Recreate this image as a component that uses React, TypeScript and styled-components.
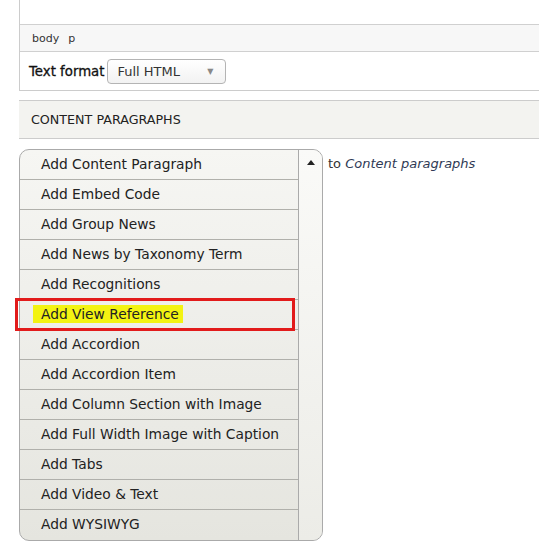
import React from "react";
import styled, { createGlobalStyle } from "styled-components";

const Global = createGlobalStyle`
  html, body { margin: 0; padding: 0; background: #fff; overflow: hidden; }
  body { font-family: "DejaVu Sans", Verdana, sans-serif; color: #333; }
`;

const Page = styled.div`
  width: 539px;
  height: 558px;
  padding-left: 19px;
  box-sizing: border-box;
  overflow: hidden;
`;

const Editor = styled.div`
  width: 560px;
  border-left: 1px solid #ccc;
  border-bottom: 1px solid #ccc;
`;

const EditArea = styled.div`
  height: 24px;
  border-bottom: 1px solid #d0d0d0;
  background: #fff;
`;

const PathBar = styled.div`
  height: 26px;
  background: #f7f7f7;
  border-bottom: 1px solid #d0d0d0;
  display: flex;
  align-items: center;
  gap: 9px;
  padding-left: 12px;
  font-size: 11px;
  color: #333;
`;

const FormatRow = styled.div`
  height: 38px;
  display: flex;
  align-items: center;
  gap: 3px;
  padding-left: 9px;
`;

const Label = styled.span`
  font-size: 13.3px;
  color: #111;
  -webkit-text-stroke: 0.3px #111;
`;

const Select = styled.div`
  width: 119px;
  height: 25px;
  box-sizing: border-box;
  border: 1px solid #b4b4b4;
  border-radius: 4px;
  background: linear-gradient(#ffffff, #f2f2f2);
  display: flex;
  align-items: center;
  justify-content: space-between;
  padding: 0 12px 0 9px;
  font-size: 13px;
  color: #333;
`;

const Caret = styled.span`
  font-size: 8px;
  color: #888;
`;

const SectionHeader = styled.div`
  margin-top: 9px;
  height: 37px;
  width: 560px;
  background: #f3f3f0;
  border-top: 1px solid #ccc;
  border-bottom: 1px solid #ccc;
  display: flex;
  align-items: center;
  padding-left: 12px;
  font-size: 12.7px;
  text-transform: uppercase;
  color: #222;
`;

const WidgetRow = styled.div`
  margin-top: 10px;
  display: flex;
  align-items: flex-start;
  gap: 5px;
`;

const Dropbutton = styled.div`
  width: 304px;
  box-sizing: border-box;
  border: 1px solid #aaa;
  border-radius: 10px;
  display: flex;
  position: relative;
  background: linear-gradient(#f6f6f3, #e5e5df);
`;

const List = styled.ul`
  list-style: none;
  margin: 0;
  padding: 0;
  width: 278px;
  border-right: 1px solid #aaa;
`;

const Item = styled.li<{ $last?: boolean }>`
  height: 29px;
  box-sizing: border-box;
  height: 30px;
  padding-bottom: 2px;
  display: flex;
  align-items: center;
  padding-left: 21px;
  border-bottom: ${(p) => (p.$last ? "none" : "1px solid #b0b0ab")};
  font-size: 13.8px;
  color: #222;
  position: relative;
  white-space: nowrap;
`;

const Highlight = styled.span`
  background: #f3f312;
  padding: 1px 4px 1px 8px;
  margin-left: -8px;
`;

const RedBox = styled.span`
  position: absolute;
  left: -5px;
  top: -2px;
  width: 280px;
  height: 33px;
  box-sizing: border-box;
  border: 3px solid #e21b1b;
  pointer-events: none;
`;

const Toggle = styled.div`
  flex: 1;
  display: flex;
  justify-content: center;
  padding-top: 10px;
  background: linear-gradient(#fafaf8, #ecece7);
  border-radius: 0 9px 9px 0;
`;

const Arrow = styled.span`
  width: 0;
  height: 0;
  border-left: 4px solid transparent;
  border-right: 4px solid transparent;
  border-bottom: 5px solid #222;
`;

const Target = styled.div`
  padding-top: 7px;
  font-size: 13px;
  color: #333;
  em { color: #2f3a55; }
`;

const items = [
  "Add Content Paragraph",
  "Add Embed Code",
  "Add Group News",
  "Add News by Taxonomy Term",
  "Add Recognitions",
  "Add View Reference",
  "Add Accordion",
  "Add Accordion Item",
  "Add Column Section with Image",
  "Add Full Width Image with Caption",
  "Add Tabs",
  "Add Video & Text",
  "Add WYSIWYG",
];

export default function App() {
  return (
    <Page>
      <Global />
      <Editor>
        <EditArea />
        <PathBar>
          <span>body</span>
          <span>p</span>
        </PathBar>
        <FormatRow>
          <Label>Text format</Label>
          <Select>
            <span>Full HTML</span>
            <Caret>▼</Caret>
          </Select>
        </FormatRow>
      </Editor>
      <SectionHeader>Content paragraphs</SectionHeader>
      <WidgetRow>
        <Dropbutton>
          <List>
            {items.map((t, i) => (
              <Item key={t} $last={i === items.length - 1}>
                {t === "Add View Reference" ? (
                  <>
                    <Highlight>{t}</Highlight>
                    <RedBox />
                  </>
                ) : (
                  t
                )}
              </Item>
            ))}
          </List>
          <Toggle>
            <Arrow />
          </Toggle>
        </Dropbutton>
        <Target>
          to <em>Content paragraphs</em>
        </Target>
      </WidgetRow>
    </Page>
  );
}
